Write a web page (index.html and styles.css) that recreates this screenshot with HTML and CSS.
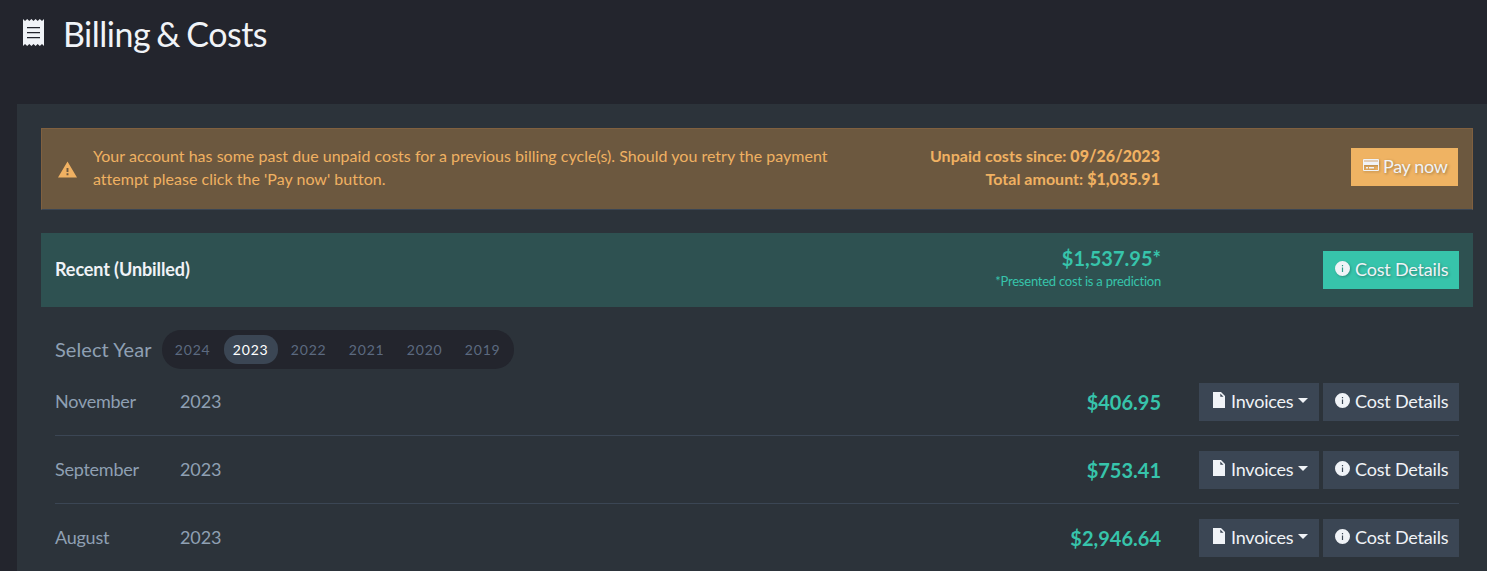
FILE: index.html
```
<!DOCTYPE html>
<html lang="en">
<head>
<meta charset="utf-8">
<title>Billing &amp; Costs</title>
<link rel="stylesheet" href="styles.css">
</head>
<body>
<svg class="sprite" aria-hidden="true">
  <symbol id="i-receipt" viewBox="0 0 21 27"><path fill-rule="evenodd" d="M0 0l2 2L4.200 0l2.100 2L8.400 0l2.100 2L12.600 0l2.100 2L16.800 0 19 2 21 0v27l-2-2-2.200 2-2.100-2-2.100 2-2.100-2-2.100 2-2.100-2-2.100 2L2 25 0 27zM4 8v1.200h13V8zM4 13v1.200h13V13zM4 18v1.200h13V18z"/></symbol>
  <symbol id="i-warning" viewBox="0 0 20 17"><path fill-rule="evenodd" d="M10 0L20 17H0zM9 7v4h2v-4zM9 12.500v2h2v-2z"/></symbol>
  <symbol id="i-card" viewBox="0 0 16 12"><path fill-rule="evenodd" d="M1 0h14a1 1 0 0 1 1 1v10a1 1 0 0 1-1 1H1a1 1 0 0 1-1-1V1a1 1 0 0 1 1-1zM1 6v5h14V6z"/><path class="stripe" d="M1 1h14v2H1z"/><path d="M3 8h2v1.500H3zM6 8h5v1.500H6z"/></symbol>
  <symbol id="i-info" viewBox="0 0 15 15"><path fill-rule="evenodd" d="M7.500 0a7.500 7.500 0 1 1 0 15 7.500 7.500 0 0 1 0-15zM6.900 4v1.300h1.200V4zM6.900 6.500V11h1.200V6.500z"/></symbol>
  <symbol id="i-file" viewBox="0 0 12 16"><path fill-rule="evenodd" d="M0 0h8l4 4v12H0zM7.300 1.500v3.200h3.200z"/></symbol>
</svg>
<header class="page-head">
  <svg class="ico-receipt"><use href="#i-receipt"/></svg>
  <h1>Billing &amp; Costs</h1>
</header>
<main class="panel">
  <section class="alert">
    <svg class="ico-warning"><use href="#i-warning"/></svg>
    <p class="alert-text">Your account has some past due unpaid costs for a previous billing cycle(s). Should you retry the payment<br>attempt please click the 'Pay now' button.</p>
    <p class="alert-sum">Unpaid costs since: <b>09/26/2023</b><br>Total amount: <b>$1,035.91</b></p>
    <button class="btn btn-pay"><svg class="ico-card"><use href="#i-card"/></svg><span>Pay now</span></button>
  </section>
  <section class="recent">
    <h2>Recent (Unbilled)</h2>
    <div class="estimate"><div class="amount">$1,537.95*</div><small>*Presented cost is a prediction</small></div>
    <button class="btn btn-teal"><svg class="ico-info"><use href="#i-info"/></svg><span>Cost Details</span></button>
  </section>
  <nav class="years">
    <span class="years-label">Select Year</span>
    <div class="pills"><a>2024</a><a class="active">2023</a><a>2022</a><a>2021</a><a>2020</a><a>2019</a></div>
  </nav>
  <div class="rows">
    <div class="row"><span class="month">November</span><span class="year">2023</span><span class="amount">$406.95</span>
      <div class="actions"><button class="btn btn-inv"><svg class="ico-file"><use href="#i-file"/></svg><span>Invoices</span><i class="caret"></i></button><button class="btn"><svg class="ico-info"><use href="#i-info"/></svg><span>Cost Details</span></button></div></div>
    <div class="row"><span class="month">September</span><span class="year">2023</span><span class="amount">$753.41</span>
      <div class="actions"><button class="btn btn-inv"><svg class="ico-file"><use href="#i-file"/></svg><span>Invoices</span><i class="caret"></i></button><button class="btn"><svg class="ico-info"><use href="#i-info"/></svg><span>Cost Details</span></button></div></div>
    <div class="row"><span class="month">August</span><span class="year">2023</span><span class="amount">$2,946.64</span>
      <div class="actions"><button class="btn btn-inv"><svg class="ico-file"><use href="#i-file"/></svg><span>Invoices</span><i class="caret"></i></button><button class="btn"><svg class="ico-info"><use href="#i-info"/></svg><span>Cost Details</span></button></div></div>
  </div>
</main>
</body>
</html>
```
FILE: styles.css
```
* { box-sizing: border-box; }
html, body { height: 571px; overflow: hidden; }
body { margin: 0; background: #23252d; color: #f0f3f7; font-family: Lato, "Liberation Sans", sans-serif; font-size: 18px; }
h1, h2, p { margin: 0; }
svg { fill: currentColor; flex: none; }
.sprite { display: none; }

.page-head { display: flex; height: 104px; padding: 12px 0 0 23px; gap: 19px; align-items: flex-start; }
.page-head h1 { font-size: 34px; font-weight: 400; line-height: 44px; letter-spacing: -.5px; word-spacing: -2px; }
.ico-receipt { width: 21px; height: 27px; margin-top: 7px; }

.panel { margin-left: 17px; padding: 24px 14px 0 24px; height: 467px; overflow: hidden; background: #2c333a; }

.alert { display: grid; grid-template-columns: 51px 1fr 240px 298px; height: 82px; align-items: center; padding: 0 14px 4px 0; background: #6c583f; border: 1px solid #80603f; border-bottom-color: #3b4654; color: #f0b162; font-size: 16px; line-height: 23px; }
.ico-warning { width: 19px; height: 17px; margin: 4px 0 0 16px; }
.alert-text { white-space: nowrap; letter-spacing: .02px; }
.alert-sum { text-align: right; font-weight: 700; white-space: nowrap; letter-spacing: .03px; }
.alert-sum b { font-weight: 900; }

.btn { display: inline-flex; align-items: center; gap: 5px; height: 38px; width: 136px; margin: 0; padding: 0 0 0 12px; border: 0; background: #3b4654; color: #f0f3f7; font: 400 18px/27px Lato, sans-serif; letter-spacing: -.2px; white-space: nowrap; }
.btn-pay, .btn-teal { justify-self: end; text-shadow: 1px 1px 3px rgba(0, 0, 0, .35); }
.btn-pay svg, .btn-teal svg { filter: drop-shadow(1px 1px 1px rgba(0, 0, 0, .25)); }
.btn-pay { width: 107px; background: #efb363; padding-bottom: 1px; gap: 4px; letter-spacing: -.35px; }
.btn-teal { background: #37c4ab; padding-bottom: 1px; }
.btn-inv { width: 120px; padding-left: 14px; }
.ico-card { width: 16px; height: 12px; margin-top: -3px; }
.stripe { fill: #e3cdb5; }
.ico-info { width: 15px; height: 15px; margin-top: -2px; }
.ico-file { width: 12px; height: 16px; margin: -3px 1px 0 0; }
.btn-inv .caret { border: 5px solid transparent; border-top-color: currentColor; border-bottom: 0; margin-top: -3px; }

.recent { display: grid; grid-template-columns: 1fr 300px 298px; height: 74px; margin-top: 23px; padding: 0 14px; align-items: center; background: #2e5151; }
.recent h2 { font-size: 18px; font-weight: 700; line-height: 27px; letter-spacing: -.1px; padding-bottom: 2px; }
.estimate { text-align: right; padding-bottom: 4px; }
.amount { color: #37c4ab; font-size: 20px; font-weight: 700; line-height: 26px; }
.estimate small { display: block; color: #37c4ab; font-size: 13px; line-height: 20px; letter-spacing: -.23px; }

.years { display: flex; align-items: center; height: 38px; margin: 23px 0 0 14px; gap: 10px; color: #8fa0b3; }
.years-label { font-size: 20px; letter-spacing: .08px; }
.pills { display: flex; gap: 4px; padding: 5px 4px; border-radius: 19px; background: #23252d; }
.pills a { width: 54px; height: 29px; border-radius: 14px; text-align: center; font-size: 14px; line-height: 29px; letter-spacing: .8px; color: #5c6a80; }
.pills a.active { background: #3b4654; color: #fff; }

.rows { margin: 0 14px; color: #8fa0b3; }
.years + .rows { margin-top: -1px; }
.row { display: grid; grid-template-columns: 125px 1fr 200px 298px; height: 68px; align-items: center; border-bottom: 1px solid #3b4654; }
.row:first-child { height: 69px; padding-top: 1px; }
.row .month { letter-spacing: -.25px; }
.row .year { letter-spacing: -.1px; }
.row .month, .row .year { padding-bottom: 2px; }
.row .amount { text-align: right; }
.actions { display: flex; justify-content: flex-end; gap: 4px; }
```
